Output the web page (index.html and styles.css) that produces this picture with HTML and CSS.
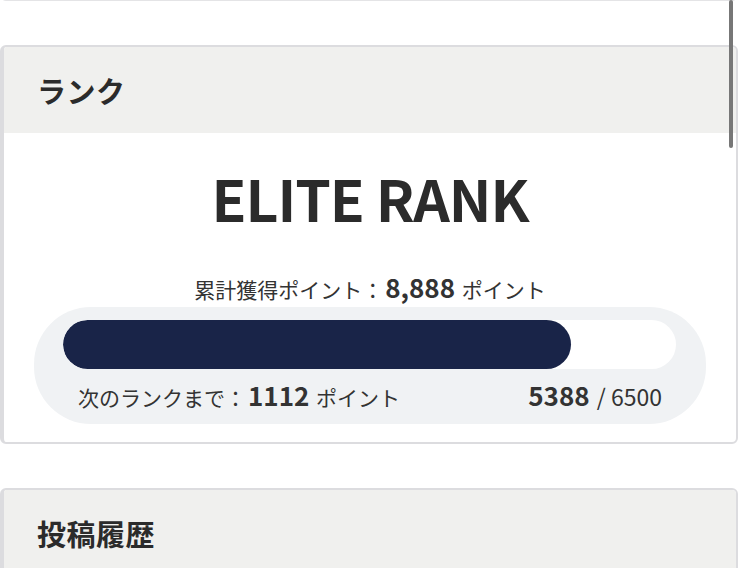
FILE: index.html
```html
<!DOCTYPE html>
<html lang="ja">
<head>
    <meta charset="UTF-8">
    <meta name="viewport" content="width=device-width, initial-scale=1.0">
    <title>マイページ - ランク</title>
    <link rel="stylesheet" href="styles.css">
</head>
<body>

    <!-- Scroll indicator -->
    <div class="scroll-thumb"></div>

    <main class="page">
        <!-- Profile (scrolled above) -->
        <section class="card card-prev"></section>

        <!-- Rank -->
        <section class="card">
            <div class="card-header">
                <h2>ランク</h2>
            </div>
            <div class="card-body rank-body">
                <div class="rank-name">ELITE RANK</div>
                <p class="rank-total">累計獲得ポイント：<strong>8,888</strong> ポイント</p>

                <div class="progress-box">
                    <div class="progress-track">
                        <div class="progress-fill" style="width: 82.9%"></div>
                    </div>
                    <div class="progress-info">
                        <span class="next-rank">次のランクまで：<strong>1112</strong> ポイント</span>
                        <span class="progress-count"><strong>5388</strong> / 6500</span>
                    </div>
                </div>
            </div>
        </section>

        <!-- Post history -->
        <section class="card">
            <div class="card-header">
                <h2>投稿履歴</h2>
            </div>
            <div class="card-body history-body"></div>
        </section>
    </main>

</body>
</html>
```

FILE: styles.css
```css
/* Global */
* {
    box-sizing: border-box;
    margin: 0;
    padding: 0;
}

body {
    background-color: #fff;
    color: #2d2d2d;
    font-family: "Noto Sans CJK JP", "Noto Sans", sans-serif;
    overflow: hidden;
}

.page {
    display: flex;
    flex-direction: column;
    gap: 44px;
    margin-top: -119px;
    padding-right: 2px;
}

/* Scroll indicator */
.scroll-thumb {
    position: fixed;
    top: 0;
    right: 7px;
    width: 4px;
    height: 148px;
    background-color: #777;
    border-radius: 2px;
    z-index: 10;
}

/* Cards */
.card {
    background-color: #fff;
    border: 2px solid #dcdcdf;
    border-left-width: 4px;
    border-radius: 6px;
    overflow: hidden;
}

.card-prev {
    height: 120px;
    border-color: #e4e4e6;
    border-width: 1px;
}

.card-header {
    background-color: #f0f0ee;
    height: 86px;
    display: flex;
    align-items: center;
    padding-left: 33px;
}

.card-header h2 {
    font-size: 29px;
    font-weight: bold;
    color: #2b2b2b;
    letter-spacing: 0.5px;
}

/* Rank */
.rank-body {
    display: flex;
    flex-direction: column;
    align-items: center;
    padding: 24px 30px 18px;
}

.rank-name {
    font-size: 57px;
    font-weight: bold;
    line-height: 80px;
    letter-spacing: -1px;
    color: #2b2b2b;
}

.rank-total {
    font-size: 21px;
    line-height: 34px;
    margin: 33px 0 1px;
    color: #333;
}

.rank-total strong {
    font-size: 26px;
    margin: 0 2px;
}

/* Progress */
.progress-box {
    align-self: stretch;
    background-color: #f0f2f4;
    border-radius: 57px;
    padding: 13px 30px 8px 29px;
}

.progress-track {
    height: 49px;
    background-color: #fff;
    border-radius: 25px;
    overflow: hidden;
}

.progress-fill {
    height: 100%;
    background-color: #192448;
    border-radius: 25px;
}

.progress-info {
    display: flex;
    justify-content: space-between;
    align-items: baseline;
    padding: 7px 14px 0 15px;
    font-size: 21px;
    line-height: 38px;
    color: #333;
}

.progress-info strong {
    font-size: 26px;
    margin: 0 2px;
}

.progress-count {
    font-size: 23px;
}

.history-body {
    height: 200px;
}
```
